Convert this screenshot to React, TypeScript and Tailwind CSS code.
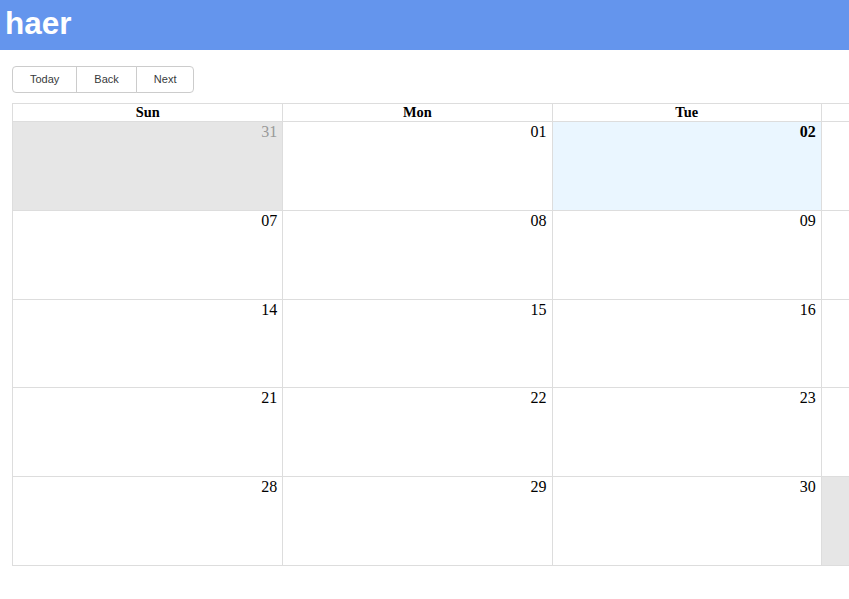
import React from 'react';

interface DayCell {
  label: string;
  offRange?: boolean;
  today?: boolean;
}

const weekdays = ['Sun', 'Mon', 'Tue', 'Wed', 'Thu', 'Fri', 'Sat'];

// month starts on Monday, 30 days
const buildWeeks = (): DayCell[][] => {
  const weeks: DayCell[][] = [];
  let day = 0; // Sun before the 1st
  for (let w = 0; w < 5; w++) {
    const row: DayCell[] = [];
    for (let d = 0; d < 7; d++) {
      if (day === 0) {
        row.push({ label: '31', offRange: true });
      } else if (day > 30) {
        row.push({ label: String(day - 30).padStart(2, '0'), offRange: true });
      } else {
        row.push({ label: String(day).padStart(2, '0'), today: day === 2 });
      }
      day++;
    }
    weeks.push(row);
  }
  return weeks;
};

const Toolbar: React.FC = () => {
  const buttons = ['Today', 'Back', 'Next'];
  return (
    <div className="flex mb-[10px]">
      <div className="flex">
        {buttons.map((label, i) => (
          <button
            key={label}
            className={`px-[17px] py-[6px] text-[11px] leading-[13px] text-[#373a3c] bg-white border border-[#ccc] ${
              i === 0 ? 'rounded-l-[4px]' : '-ml-px'
            } ${i === buttons.length - 1 ? 'rounded-r-[4px]' : ''}`}
            style={{ fontFamily: '"Liberation Sans", Arial, sans-serif' }}
          >
            {label}
          </button>
        ))}
      </div>
    </div>
  );
};

export default function App() {
  const weeks = buildWeeks();

  return (
    <div className="w-[849px] h-[599px] overflow-hidden bg-white">
      {/* Top bar */}
      <div className="h-[50px] bg-[#6495ed] flex items-center px-[5px]">
        <h1
          className="text-[31.5px] font-bold text-white leading-none -mt-[2px]"
          style={{ fontFamily: '"Liberation Sans", Arial, sans-serif' }}
        >
          haer
        </h1>
      </div>

      <div className="pl-3 pt-4">
        <Toolbar />

        {/* Month view */}
        <div
          className="w-[1887px] h-[463px] flex flex-col border border-[#ddd] text-black"
          style={{ fontFamily: '"Liberation Serif", "Times New Roman", serif' }}
        >
          <div className="grid grid-cols-7 h-[18px] border-b border-[#ddd]">
            {weekdays.map((d, i) => (
              <div
                key={d}
                className={`text-center text-[14.4px] font-bold leading-[17px] px-[3px] ${
                  i > 0 ? 'border-l border-[#ddd]' : ''
                }`}
              >
                {d}
              </div>
            ))}
          </div>

          {weeks.map((week, w) => (
            <div
              key={w}
              className={`grid grid-cols-7 flex-1 ${w > 0 ? 'border-t border-[#ddd]' : ''}`}
            >
              {week.map((cell, i) => (
                <div
                  key={i}
                  className={`text-right pr-[5px] text-[16px] leading-[20px] ${
                    i > 0 ? 'border-l border-[#ddd]' : ''
                  } ${cell.offRange ? 'bg-[#e6e6e6] text-[#999]' : ''} ${
                    cell.today ? 'bg-[#eaf6ff] font-bold' : ''
                  }`}
                >
                  {cell.label}
                </div>
              ))}
            </div>
          ))}
        </div>
      </div>
    </div>
  );
}
